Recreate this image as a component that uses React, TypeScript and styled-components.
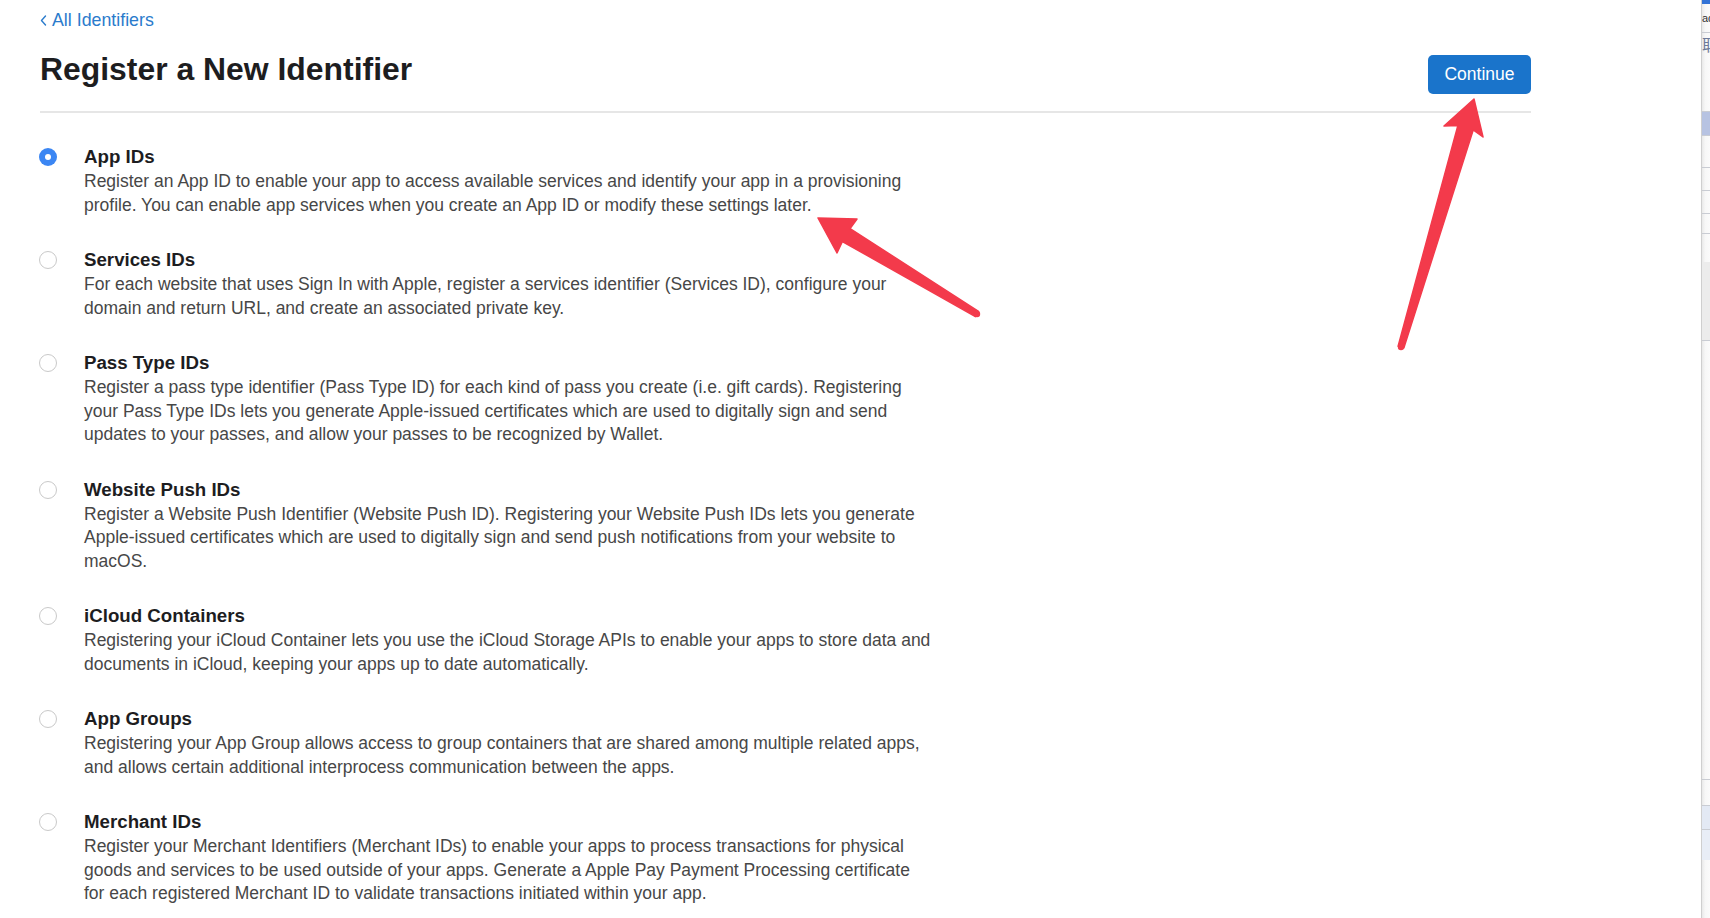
import React from "react";
import styled, { createGlobalStyle } from "styled-components";

const GlobalStyle = createGlobalStyle`
  html, body { margin: 0; padding: 0; background: #fff; }
  body { font-family: "Liberation Sans", Arial, sans-serif; -webkit-font-smoothing: antialiased; }
  * { box-sizing: border-box; }
`;

const Page = styled.div`
  position: relative;
  display: flex;
  width: 1710px;
  height: 918px;
  overflow: hidden;
  background: #fff;
`;

const Main = styled.main`
  flex: 1;
  min-width: 0;
  padding: 10px 170px 0 40px;
`;

const BackLink = styled.a`
  display: inline-flex;
  align-items: center;
  gap: 5px;
  font-size: 17.8px;
  line-height: 20px;
  color: #2a7bcc;
  text-decoration: none;
`;

const Header = styled.header`
  display: flex;
  justify-content: space-between;
  align-items: flex-start;
  margin-top: 20px;
  padding-bottom: 17px;
  border-bottom: 2px solid #e6e6e6;
`;

const Title = styled.h1`
  margin: 0;
  font-size: 31.9px;
  line-height: 38px;
  font-weight: 700;
  color: #1d1d1f;
`;

const ContinueButton = styled.button`
  margin-top: 5px;
  width: 103px;
  height: 39px;
  border: 0;
  border-radius: 5px;
  background: #1a74cb;
  color: #fff;
  font-family: inherit;
  font-size: 17.5px;
  cursor: pointer;
`;

const List = styled.div`
  display: flex;
  flex-direction: column;
  gap: 30px;
  padding-top: 31px;
`;

const Item = styled.label`
  display: grid;
  grid-template-columns: 44px 1fr;
  cursor: pointer;
`;

const Radio = styled.span<{ $checked?: boolean }>`
  position: relative;
  display: block;
  width: 18px;
  height: 18px;
  margin-top: 4px;
  margin-left: -1px;
  border-radius: 50%;
  background: ${(p) => (p.$checked ? "#3b86f3" : "#fff")};
  border: ${(p) => (p.$checked ? "0" : "1px solid #c9c9c9")};
  &::after {
    content: "";
    display: ${(p) => (p.$checked ? "block" : "none")};
    position: absolute;
    left: 6px;
    top: 6px;
    width: 6px;
    height: 6px;
    border-radius: 50%;
    background: #fff;
  }
`;

const ItemTitle = styled.div`
  font-size: 18.7px;
  line-height: 25px;
  font-weight: 700;
  color: #1d1d1f;
`;

const Desc = styled.div`
  margin-top: 1px;
  font-size: 17.5px;
  line-height: 23.5px;
  color: #474747;
`;

const DescLine = styled.span`
  display: block;
  white-space: nowrap;
`;

const Strip = styled.aside`
  width: 9px;
  flex: none;
  display: flex;
  flex-direction: column;
  border-left: 1px solid #cfcfcf;
  background: linear-gradient(to right, #e9e9e9, #f7f7f7 40%, #fbfbfb);
  overflow: hidden;
`;

const StripCell = styled.div<{ $h: number; $bg?: string; $line?: boolean }>`
  flex: none;
  height: ${(p) => p.$h}px;
  background: ${(p) => p.$bg || "transparent"};
  border-bottom: ${(p) => (p.$line ? "1px solid #c9ccd3" : "0")};
  font-size: 11px;
  line-height: ${(p) => p.$h}px;
  color: #333;
  white-space: nowrap;
  overflow: hidden;
`;

const StripGlyph = styled.span`
  font-family: "Noto Sans CJK SC", sans-serif;
  font-size: 16px;
  color: #6d7a99;
`;

const Overlay = styled.svg`
  position: absolute;
  left: 0;
  top: 0;
  pointer-events: none;
`;

type Entry = { title: string; lines: string[]; checked?: boolean };

const entries: Entry[] = [
  {
    title: "App IDs",
    checked: true,
    lines: [
      "Register an App ID to enable your app to access available services and identify your app in a provisioning",
      "profile. You can enable app services when you create an App ID or modify these settings later.",
    ],
  },
  {
    title: "Services IDs",
    lines: [
      "For each website that uses Sign In with Apple, register a services identifier (Services ID), configure your",
      "domain and return URL, and create an associated private key.",
    ],
  },
  {
    title: "Pass Type IDs",
    lines: [
      "Register a pass type identifier (Pass Type ID) for each kind of pass you create (i.e. gift cards). Registering",
      "your Pass Type IDs lets you generate Apple-issued certificates which are used to digitally sign and send",
      "updates to your passes, and allow your passes to be recognized by Wallet.",
    ],
  },
  {
    title: "Website Push IDs",
    lines: [
      "Register a Website Push Identifier (Website Push ID). Registering your Website Push IDs lets you generate",
      "Apple-issued certificates which are used to digitally sign and send push notifications from your website to",
      "macOS.",
    ],
  },
  {
    title: "iCloud Containers",
    lines: [
      "Registering your iCloud Container lets you use the iCloud Storage APIs to enable your apps to store data and",
      "documents in iCloud, keeping your apps up to date automatically.",
    ],
  },
  {
    title: "App Groups",
    lines: [
      "Registering your App Group allows access to group containers that are shared among multiple related apps,",
      "and allows certain additional interprocess communication between the apps.",
    ],
  },
  {
    title: "Merchant IDs",
    lines: [
      "Register your Merchant Identifiers (Merchant IDs) to enable your apps to process transactions for physical",
      "goods and services to be used outside of your apps. Generate a Apple Pay Payment Processing certificate",
      "for each registered Merchant ID to validate transactions initiated within your app.",
    ],
  },
];

const ARROW = "#f33a4b";

export default function App() {
  return (
    <Page>
      <GlobalStyle />
      <Main>
        <BackLink href="#">
          <svg width="7" height="11" viewBox="0 0 7 11">
            <path d="M5.5 1 L1.5 5.5 L5.5 10" fill="none" stroke="#2a7bcc" strokeWidth="1.4" strokeLinecap="round" strokeLinejoin="round" />
          </svg>
          All Identifiers
        </BackLink>
        <Header>
          <Title>Register a New Identifier</Title>
          <ContinueButton>Continue</ContinueButton>
        </Header>
        <List>
          {entries.map((e) => (
            <Item key={e.title}>
              <Radio $checked={e.checked} />
              <div>
                <ItemTitle>{e.title}</ItemTitle>
                <Desc>
                  {e.lines.map((l) => (
                    <DescLine key={l}>{l}</DescLine>
                  ))}
                </Desc>
              </div>
            </Item>
          ))}
        </List>
      </Main>
      <Strip>
        <StripCell $h={4} $bg="#3273d6" />
        <StripCell $h={29} $line>ad</StripCell>
        <StripCell $h={22}>
          <StripGlyph>取</StripGlyph>
        </StripCell>
        <StripCell $h={57} $line />
        <StripCell $h={24} $bg="#b7c3e2" $line />
        <StripCell $h={32} $line />
        <StripCell $h={23} $line />
        <StripCell $h={23} $line />
        <StripCell $h={20} $line />
        <StripCell $h={28} />
        <StripCell $h={79} $bg="#ececec" $line />
        <StripCell $h={415} />
        <StripCell $h={24} $line />
        <StripCell $h={26} $line />
        <StripCell $h={24} $bg="#e3e9f4" $line />
        <StripCell $h={30} $bg="#e8edf6" />
      </Strip>
      <Overlay width="1710" height="918" viewBox="0 0 1710 918">
        <polygon
          points="818,218 857,219 850.1,228.6 978.5,311.4 975.4,316.6 842.4,241.5 837,253"
          fill={ARROW}
          stroke={ARROW}
          strokeWidth="1.5"
          strokeLinejoin="round"
        />
        <circle cx="977" cy="314" r="3.2" fill={ARROW} />
        <polygon
          points="1474,99 1444,126 1457.9,125.5 1398.1,346.2 1403.9,347.8 1473.2,130 1483,137"
          fill={ARROW}
          stroke={ARROW}
          strokeWidth="1.5"
          strokeLinejoin="round"
        />
        <circle cx="1401" cy="347" r="3.2" fill={ARROW} />
      </Overlay>
    </Page>
  );
}
